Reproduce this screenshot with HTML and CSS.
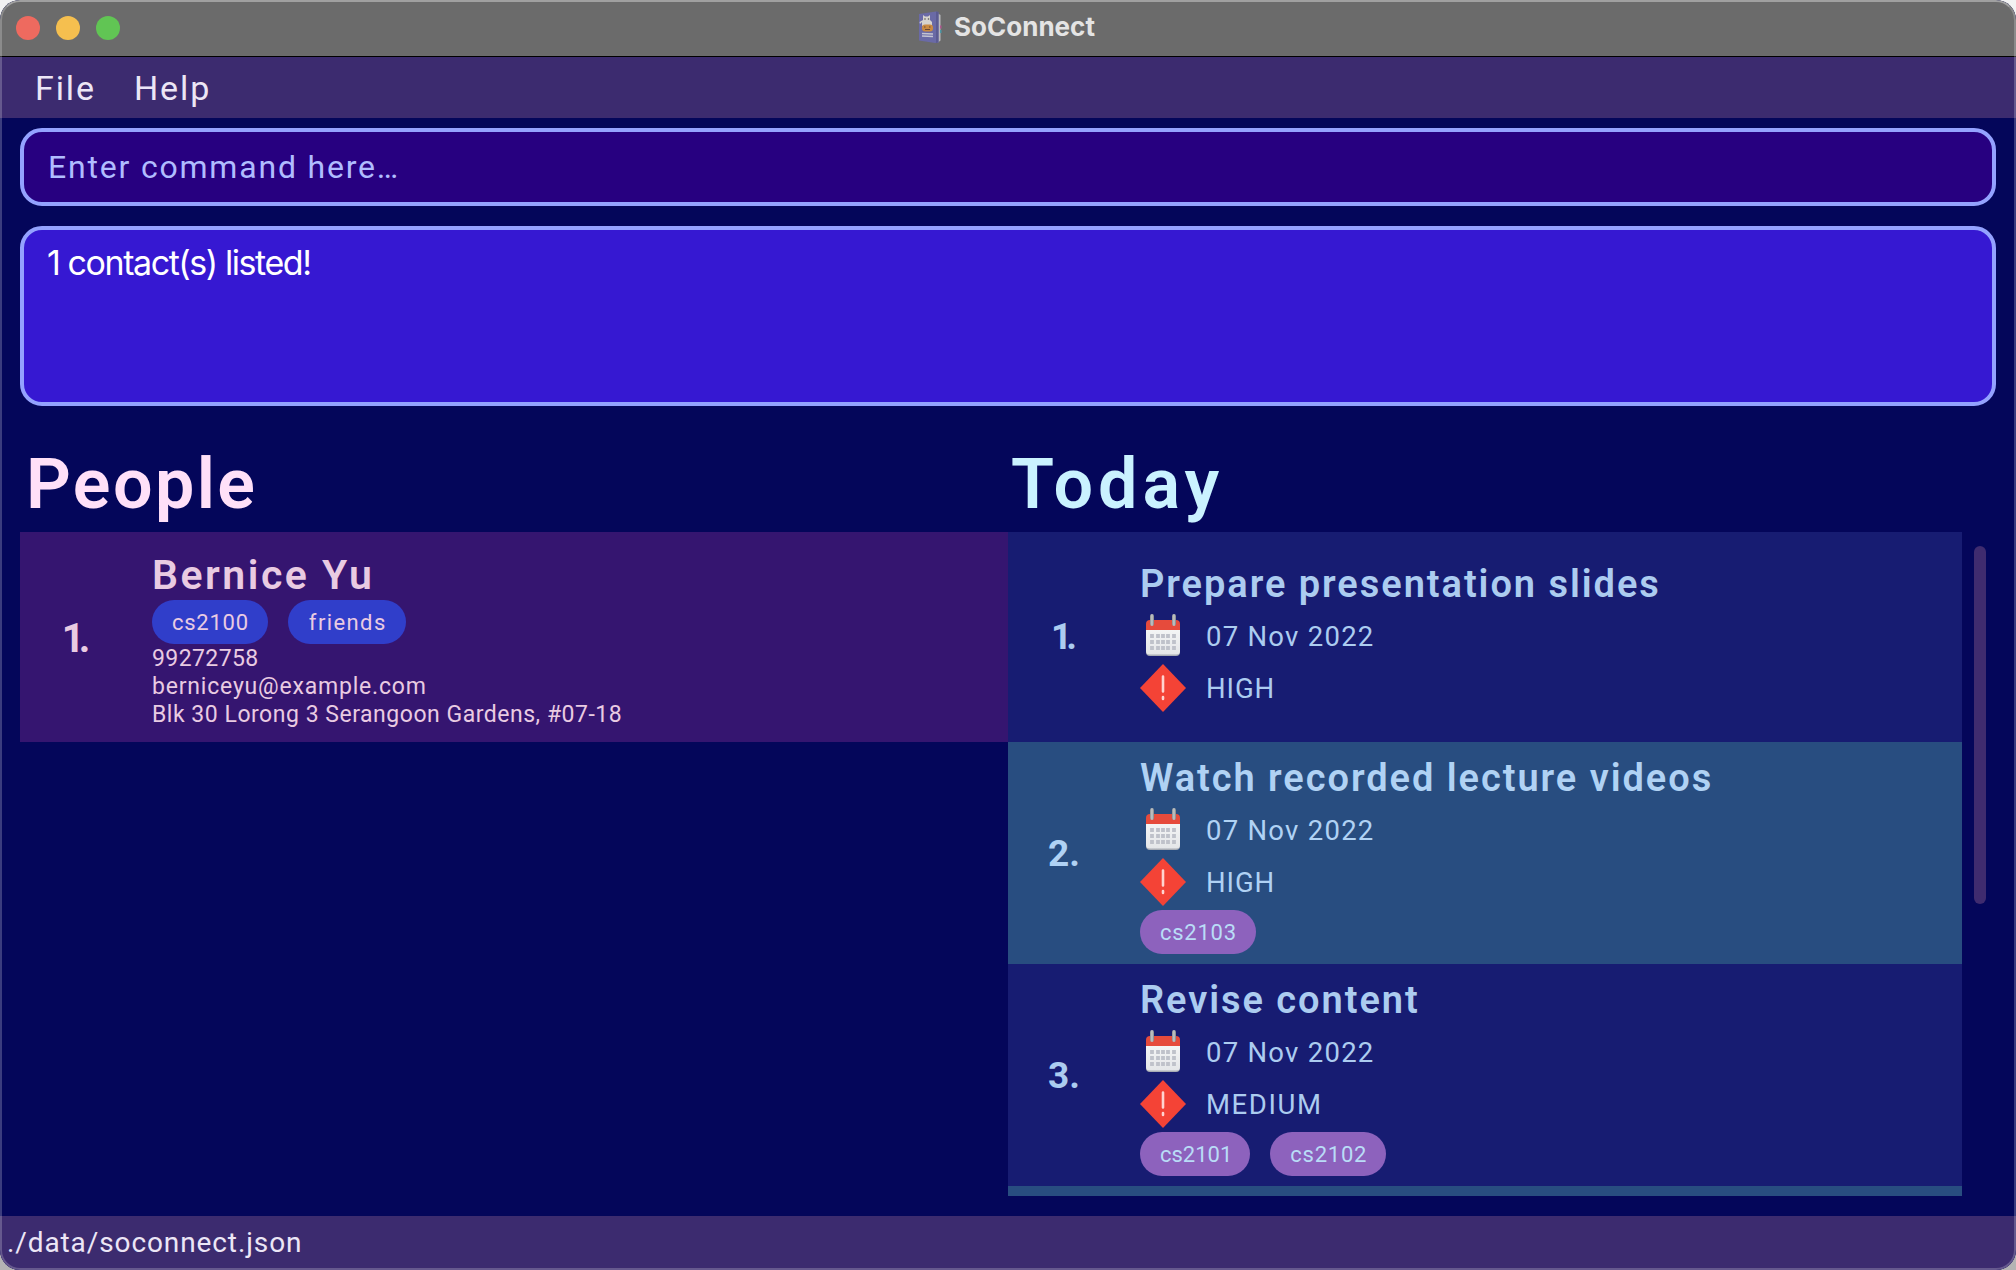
FILE: index.html
```html
<!DOCTYPE html>
<html lang="en">
<head>
<meta charset="utf-8">
<title>SoConnect</title>
<link rel="stylesheet" href="styles.css">
</head>
<body>
<svg class="defs" width="0" height="0" aria-hidden="true">
  <defs>
    <linearGradient id="ring" x1="0" y1="0" x2="1" y2="0">
      <stop offset="0" stop-color="#8b8f92"/><stop offset=".5" stop-color="#c9cccd"/><stop offset="1" stop-color="#7c8083"/>
    </linearGradient>
    <linearGradient id="paper" x1="0" y1="0" x2="0" y2="1">
      <stop offset="0" stop-color="#f6f7f7"/><stop offset="1" stop-color="#e4e6e8"/>
    </linearGradient>
    <symbol id="calendar" viewBox="0 0 48 48">
      <path d="M6 16h34v24a4 4 0 0 1-4 4H10a4 4 0 0 1-4-4z" fill="#a9adb5"/>
      <path d="M6 14h34v25a3.500 3.500 0 0 1-3.500 3.500h-27A3.500 3.500 0 0 1 6 39z" fill="url(#paper)"/>
      <path d="M6 18v-6a4 4 0 0 1 4-4h26a4 4 0 0 1 4 4v6z" fill="#e64b3c"/>
      <path d="M12 22v16M18 22v16M23 22v16M28 22v16M34 22v16" stroke="#bfc2ca" stroke-width="3.800" stroke-dasharray="4 2"/>
      <rect x="10" y="2" width="4" height="12" rx="2" fill="url(#ring)"/>
      <rect x="32" y="2" width="4" height="12" rx="2" fill="url(#ring)"/>
    </symbol>
    <symbol id="priority" viewBox="0 0 48 48">
      <path d="M23 0 46 24 23 48 0 24z" fill="#f44336"/>
      <path d="M23 12.500v15M23 33v2" stroke="#ffd3cf" stroke-width="2.600" stroke-linecap="round"/>
    </symbol>
  </defs>
</svg>
<div class="window">
  <header class="titlebar">
    <div class="lights"><i class="light close"></i><i class="light minimize"></i><i class="light zoom"></i></div>
    <div class="title">
      <svg width="26" height="32" viewBox="0 0 26 32">
        <path d="M20 2.500 22.500 4v25.500L19.500 32z" fill="#b9b9bd"/>
        <path d="M22 14.500h1.500v3H22z" fill="#b0578f"/><path d="M22 19h1.500v3H22z" fill="#4b97a5"/>
        <path d="M1 3 18 .500 20.500 1v30.500L17 32 1 29.500z" fill="#6a6aa6"/>
        <path d="M18 .500 20.500 1v30.500L18 32z" fill="#5b5b92"/>
        <path d="M5 4l2 1.500h3L12 4v5l2 2v4H4v-4l-2 2-.5-2L5 9z" fill="#d6d3ce"/>
        <circle cx="7" cy="8" r=".8" fill="#555"/><circle cx="10.500" cy="8" r=".8" fill="#555"/>
        <rect x="4" y="13.500" width="11" height="7" rx="3" fill="#c98a42"/>
        <path d="M6 16h1.500M11 16h1.500M7 18.500h5" stroke="#6d4a35" stroke-width="1.200"/>
        <path d="M4 22.500 15 23M4 25l11 .5" stroke="#c4c4d2" stroke-width="1.400"/>
      </svg>
      <span>SoConnect</span>
    </div>
  </header>
  <nav class="menubar"><span>File</span><span>Help</span></nav>
  <main class="content">
    <div class="command">Enter command here…</div>
    <div class="result">1 contact(s) listed!</div>
    <div class="panels">
      <section class="people">
        <h1>People</h1>
        <article class="person">
          <div class="index one">1.</div>
          <div class="details">
            <h2>Bernice Yu</h2>
            <div class="tags"><span class="tag">cs2100</span><span class="tag word">friends</span></div>
            <p class="phone">99272758</p>
            <p class="email">berniceyu@example.com</p>
            <p class="address">Blk 30 Lorong 3 Serangoon Gardens, #07-18</p>
          </div>
        </article>
      </section>
      <section class="today">
        <h1>Today</h1>
        <div class="scroller">
          <div class="tasks">
            <article class="task untagged">
              <div class="index one">1.</div>
              <div class="details">
                <h3>Prepare presentation slides</h3>
                <div class="field"><svg><use href="#calendar"/></svg><span>07 Nov 2022</span></div>
                <div class="field"><svg><use href="#priority"/></svg><span class="high">HIGH</span></div>
              </div>
            </article>
            <article class="task even">
              <div class="index">2.</div>
              <div class="details">
                <h3>Watch recorded lecture videos</h3>
                <div class="field"><svg><use href="#calendar"/></svg><span>07 Nov 2022</span></div>
                <div class="field"><svg><use href="#priority"/></svg><span class="high">HIGH</span></div>
                <div class="tags"><span class="tag">cs2103</span></div>
              </div>
            </article>
            <article class="task">
              <div class="index">3.</div>
              <div class="details">
                <h3>Revise content</h3>
                <div class="field"><svg><use href="#calendar"/></svg><span>07 Nov 2022</span></div>
                <div class="field"><svg><use href="#priority"/></svg><span class="medium">MEDIUM</span></div>
                <div class="tags"><span class="tag tight">cs2101</span><span class="tag">cs2102</span></div>
              </div>
            </article>
            <article class="task even clipped"></article>
          </div>
          <div class="scrollbar"><div class="thumb"></div></div>
        </div>
      </section>
    </div>
  </main>
  <footer class="statusbar">./data/soconnect.json</footer>
</div>
</body>
</html>
```
FILE: styles.css
```css
* { box-sizing: border-box; }

body {
  margin: 0;
  height: 1270px;
  overflow: hidden;
  background: linear-gradient(#f2f2f2 50%, #b4b4b4 50%);
  font-family: Roboto, "Liberation Sans", sans-serif;
}

h1, h2, h3, p { margin: 0; white-space: nowrap; }

.defs { position: absolute; }

.window {
  position: relative;
  display: flex;
  flex-direction: column;
  width: 2016px;
  height: 1270px;
  border-radius: 20px;
  overflow: hidden;
  background: #04065a;
}

/* translucent rim drawn over the window edge */
.window::after {
  content: "";
  position: absolute;
  inset: 0;
  border: 2px solid rgba(255, 255, 255, .22);
  border-top-color: rgba(255, 255, 255, .36);
  border-radius: 20px;
  pointer-events: none;
}

.titlebar {
  display: grid;
  grid-template-columns: 1fr auto 1fr;
  align-items: center;
  height: 57px;
  flex: none;
  background: #6b6b6b;
  border-bottom: 1px solid #000;
}

.lights { display: flex; gap: 16px; padding-left: 16px; }
.light { width: 24px; height: 24px; border-radius: 50%; }
.close { background: #ee6a5f; }
.minimize { background: #f5bf4f; }
.zoom { background: #61c554; }

.title {
  display: flex;
  align-items: center;
  gap: 10px;
  padding: 0 3px 3px 0;
  color: #e4e4e4;
  font: 700 26px/40px Inter, sans-serif;
}

.menubar {
  display: flex;
  align-items: center;
  gap: 38px;
  flex: none;
  height: 61px;
  padding-left: 35px;
  background: #3c2b6f;
  color: #ece6f6;
  font-size: 34px;
  letter-spacing: 1.9px;
}

.content {
  display: flex;
  flex-direction: column;
  flex: 1;
  min-height: 0;
  padding: 10px 20px 20px;
}

.command, .result {
  flex: none;
  border: 4px solid #94a2ff;
  border-radius: 22px;
}

.command {
  height: 78px;
  padding-left: 24px;
  background: #270080;
  color: #b0bcff;
  font-size: 32px;
  line-height: 70px;
  letter-spacing: 1.8px;
}

.result {
  height: 180px;
  margin-top: 20px;
  padding: 13px 23px;
  background: #3618d2;
  color: #fff;
  font: 34px/40px Inter, sans-serif;
  letter-spacing: -1.43px;
}

.panels {
  display: grid;
  grid-template-columns: 988px 988px;
  flex: 1;
  min-height: 0;
  padding-top: 39px;
}

h1 {
  height: 87px;
  font-size: 70px;
  font-weight: 600;
  line-height: 79px;
}

.people h1 { padding-left: 6px; color: #ffe0f8; letter-spacing: 2.4px; }
.today h1 { padding-left: 3px; color: #caf2ff; letter-spacing: 4.9px; }

.person, .task { display: flex; align-items: center; }

.person {
  height: 210px;
  background: #351570;
  color: #e9cbe2;
}

.index { flex: none; font-weight: 700; text-align: center; }
.index.one { letter-spacing: -6px; text-indent: -6px; }

.person .index { width: 112px; margin-right: 20px; padding-top: 2px; font-size: 40px; }
.person .details { height: 174px; }

h2 {
  font-size: 41px;
  font-weight: 600;
  line-height: 50px;
  letter-spacing: 2.5px;
}

.tags { display: flex; gap: 20px; }

.tag {
  height: 44px;
  padding: 0 19px 0 20px;
  border-radius: 22px;
  font-size: 22px;
  line-height: 45px;
  letter-spacing: .75px;
}

.tag.word { padding-left: 21px; letter-spacing: 1.4px; }
.tag.tight { padding-right: 18px; letter-spacing: 0; }
.person .tag { background: #303eca; }
.task .tag { background: #8d62bd; color: #b9dcf7; }

.person p { font-size: 23px; line-height: 28px; }
.phone { padding-top: 1px; letter-spacing: .4px; }
.email { letter-spacing: .8px; }
.address { letter-spacing: .52px; }

.scroller { display: flex; height: 664px; }
.tasks { flex: none; width: 954px; height: 664px; overflow: hidden; }

.task {
  padding: 12px 0 10px;
  background: #171c72;
  color: #acccf0;
}

.task.untagged { padding: 28px 0 30px; }
.task.even { background: #284d80; color: #b0d2f4; }
.task.clipped { height: 222px; }
.task .index { width: 112px; margin-right: 20px; font-size: 37px; line-height: 42px; }
.task.untagged .index { padding-top: 2px; }
.task .details { display: flex; flex-direction: column; gap: 4px; }

h3 {
  font-size: 38px;
  font-weight: 600;
  line-height: 48px;
  letter-spacing: 1.95px;
}

.field {
  display: flex;
  gap: 18px;
  height: 48px;
  font-size: 27.5px;
  line-height: 50px;
  letter-spacing: 1.25px;
}

.field svg { width: 48px; height: 48px; }
.high { letter-spacing: .9px; }
.medium { letter-spacing: 1.6px; }

.scrollbar { flex: none; padding: 14px 0 0 12px; }
.thumb { width: 12px; height: 358px; border-radius: 6px; background: #3f2b6f; }

.statusbar {
  flex: none;
  height: 54px;
  padding-left: 7px;
  background: #3c2b6f;
  color: #ece6f6;
  font-size: 28px;
  line-height: 53px;
  letter-spacing: .9px;
}
```
